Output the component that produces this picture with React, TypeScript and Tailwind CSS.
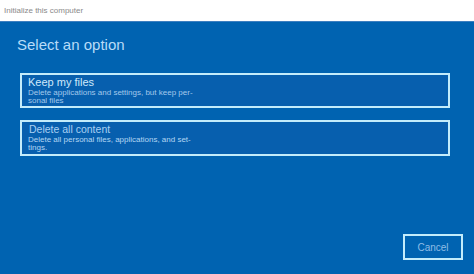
export default function App() {
  return (
    <div className="flex h-[274px] w-[474px] flex-col bg-[#0063b1] font-['Liberation_Sans',Arial,sans-serif]">
      <div className="flex h-[22px] shrink-0 items-center border-b border-[#3d7fc0] bg-white pl-[4px] text-[8px] text-[#8a8a8a]">
        Initialize this computer
      </div>

      <div className="flex flex-1 flex-col px-[20px]">
        <h1 className="mt-[14px] -ml-[3px] text-[15px] leading-[18px] text-[#b8dcf8]">Select an option</h1>

        <div className="mt-[19px] flex flex-col gap-[12px] pr-[4px]">
          <button
            type="button"
            className="flex h-[35px] flex-col items-start border-2 border-[#c3ecfb] bg-[#075fae] pl-[6px] pt-[1px] text-left"
          >
            <span className="text-[11px] leading-[13px] text-[#cfe8fb]">Keep my files</span>
            <span className="text-[8px] leading-[8px] text-[#a3c9ec]">
              Delete applications and settings, but keep per-
              <br />
              sonal files
            </span>
          </button>

          <button
            type="button"
            className="flex h-[36px] flex-col items-start border-2 border-[#c3ecfb] bg-[#075fae] pl-[6px] pt-[1px] text-left"
          >
            <span className="pl-[1px] text-[10.5px] leading-[13px] text-[#a9d1f3]">Delete all content</span>
            <span className="text-[8px] leading-[8px] text-[#b3d6f3]">
              Delete all personal files, applications, and set-
              <br />
              tings.
            </span>
          </button>
        </div>

        <div className="mt-auto mb-[14px] flex justify-end">
          <button
            type="button"
            className="mr-[-9px] flex h-[26px] w-[60px] items-center justify-center border-2 border-[#c3ecfb] text-[10px] text-[#8fbde6]"
          >
            Cancel
          </button>
        </div>
      </div>
    </div>
  );
}
